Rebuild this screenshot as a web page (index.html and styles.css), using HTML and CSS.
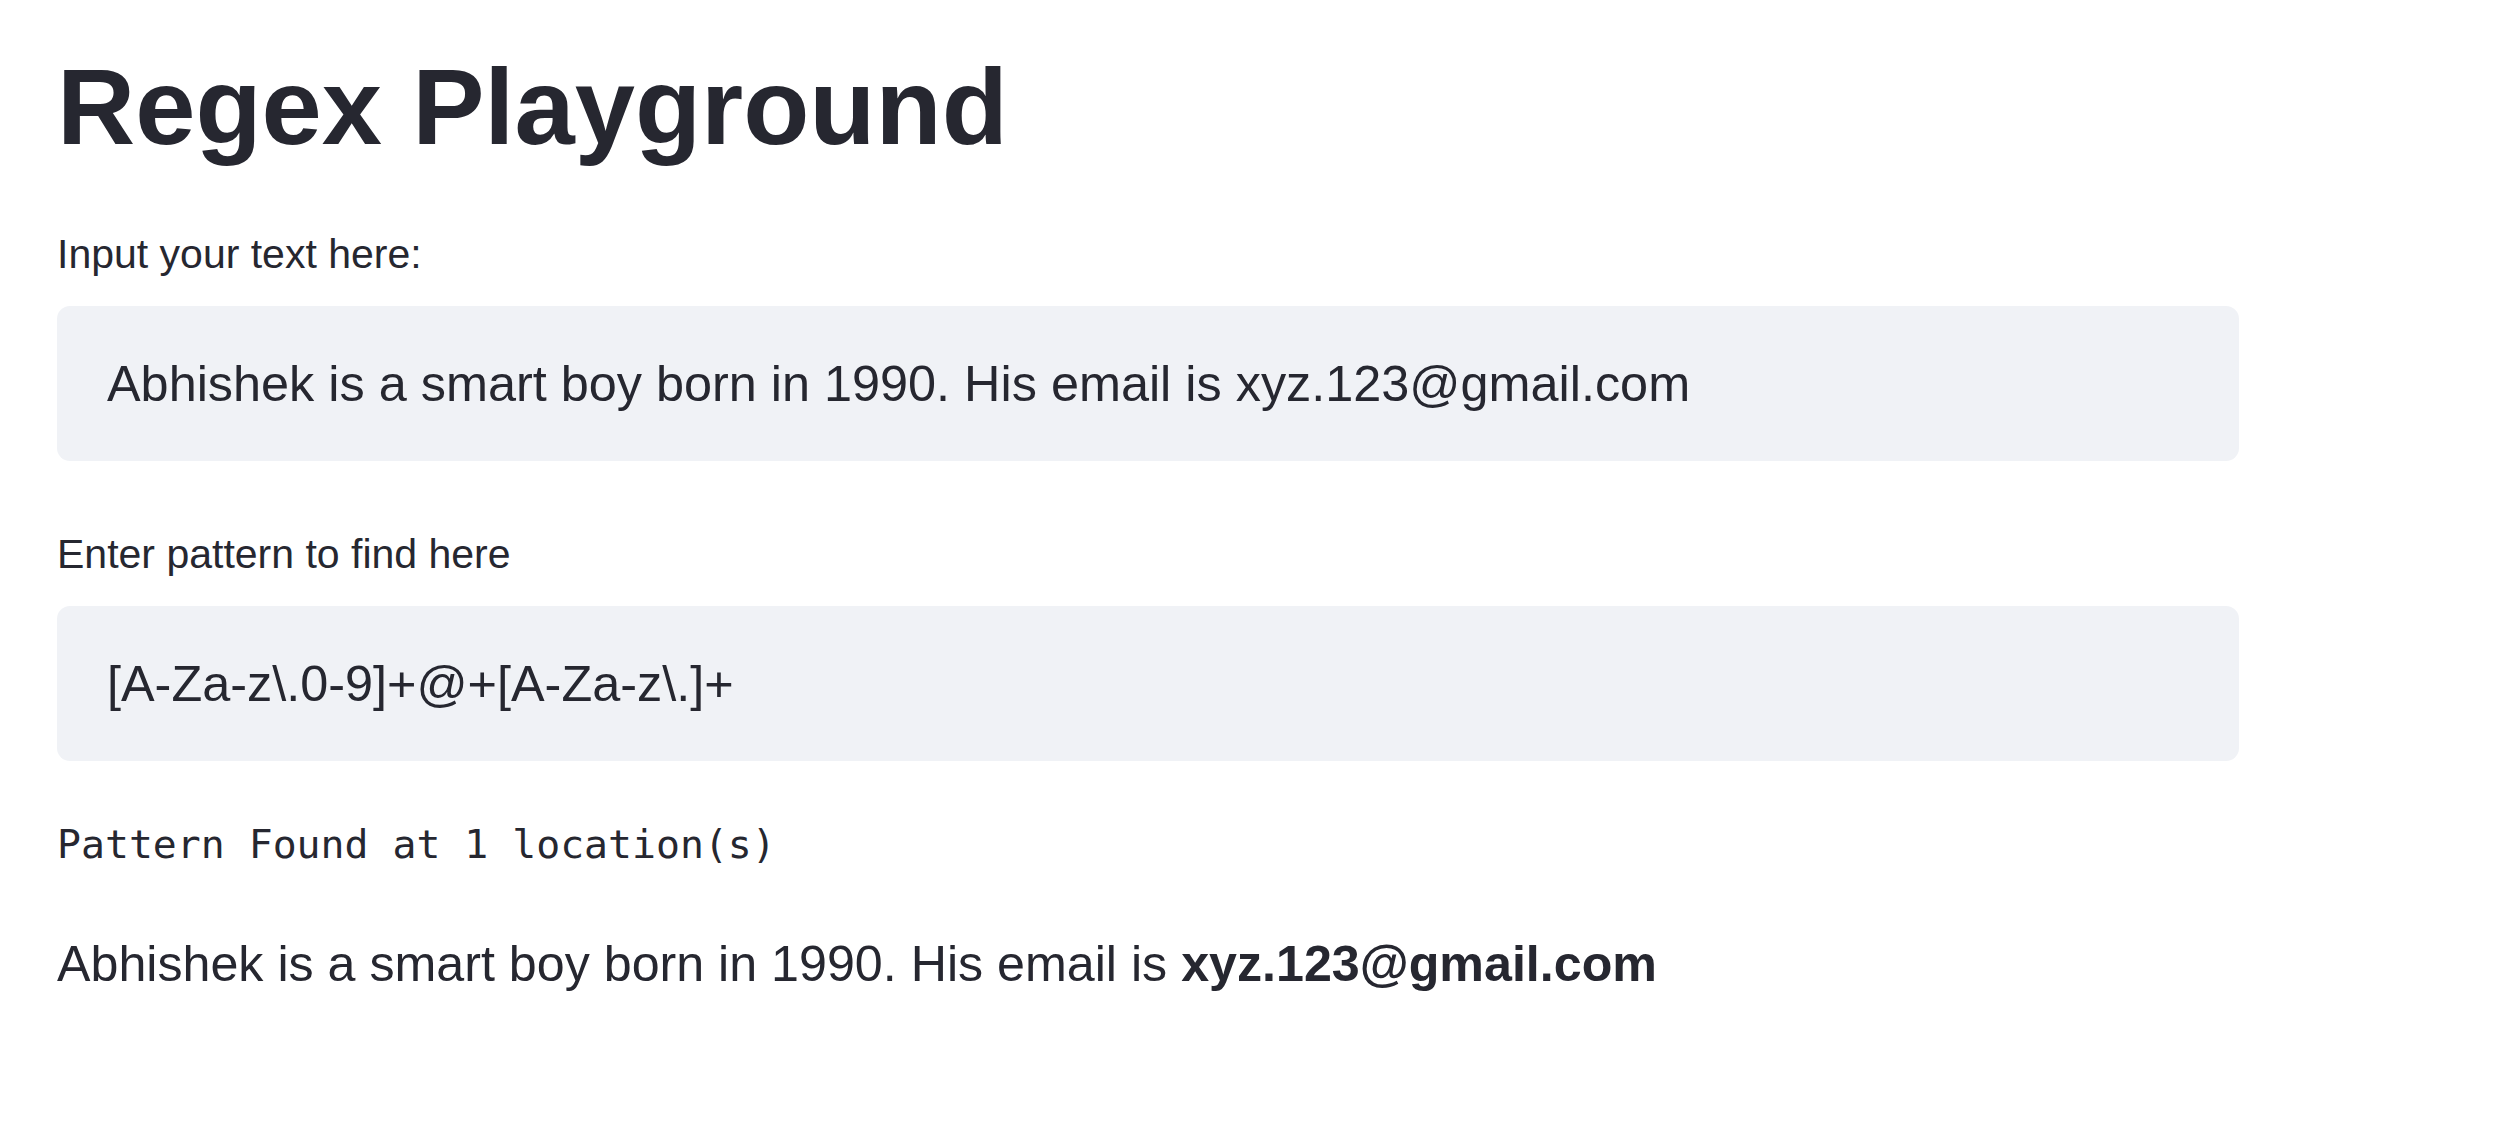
FILE: index.html
```html
<!DOCTYPE html>
<html lang="en">
<head>
<meta charset="utf-8">
<title>Regex Playground</title>
<link rel="stylesheet" href="styles.css">
</head>
<body>
<main class="app">
  <h1 class="title">Regex Playground</h1>
  <div class="field field-first">
    <label class="label" for="txt">Input your text here:</label>
    <input class="input" id="txt" type="text" value="Abhishek is a smart boy born in 1990. His email is xyz.123@gmail.com">
  </div>
  <div class="field field-second">
    <label class="label" for="pat">Enter pattern to find here</label>
    <input class="input" id="pat" type="text" value="[A-Za-z\.0-9]+@+[A-Za-z\.]+">
  </div>
  <pre class="mono">Pattern Found at 1 location(s)</pre>
  <p class="result">Abhishek is a smart boy born in 1990. His email is <strong>xyz.123@gmail.com</strong></p>
</main>
</body>
</html>
```

FILE: styles.css
```css
html, body {
  margin: 0;
  padding: 0;
  background: #ffffff;
}

body {
  font-family: "Liberation Sans", Arial, sans-serif;
  color: #262730;
}

.app {
  padding: 42px 0 0 57px;
  width: 2182px;
}

.title {
  margin: 0;
  font-size: 108.3px;
  line-height: 130px;
  font-weight: 700;
  color: #262730;
}

.field {
  display: flex;
  flex-direction: column;
}

.field-first {
  margin-top: 52px;
}

.field-second {
  margin-top: 63px;
}

.label {
  font-size: 41px;
  line-height: 61px;
  margin-bottom: 21px;
}

.input {
  box-sizing: border-box;
  width: 2182px;
  height: 155px;
  padding: 0 50px;
  border: none;
  border-radius: 13px;
  background: #f0f2f6;
  color: #262730;
  font-family: "Liberation Sans", Arial, sans-serif;
  font-size: 50.4px;
  outline: none;
}

.mono {
  margin: 53px 0 0 0;
  font-family: "DejaVu Sans Mono", "Liberation Mono", monospace;
  font-size: 39.8px;
  line-height: 60px;
  color: #262730;
}

.result {
  margin: 53px 0 0 0;
  font-size: 50.2px;
  line-height: 75px;
}

.result strong {
  font-weight: 700;
}
```
